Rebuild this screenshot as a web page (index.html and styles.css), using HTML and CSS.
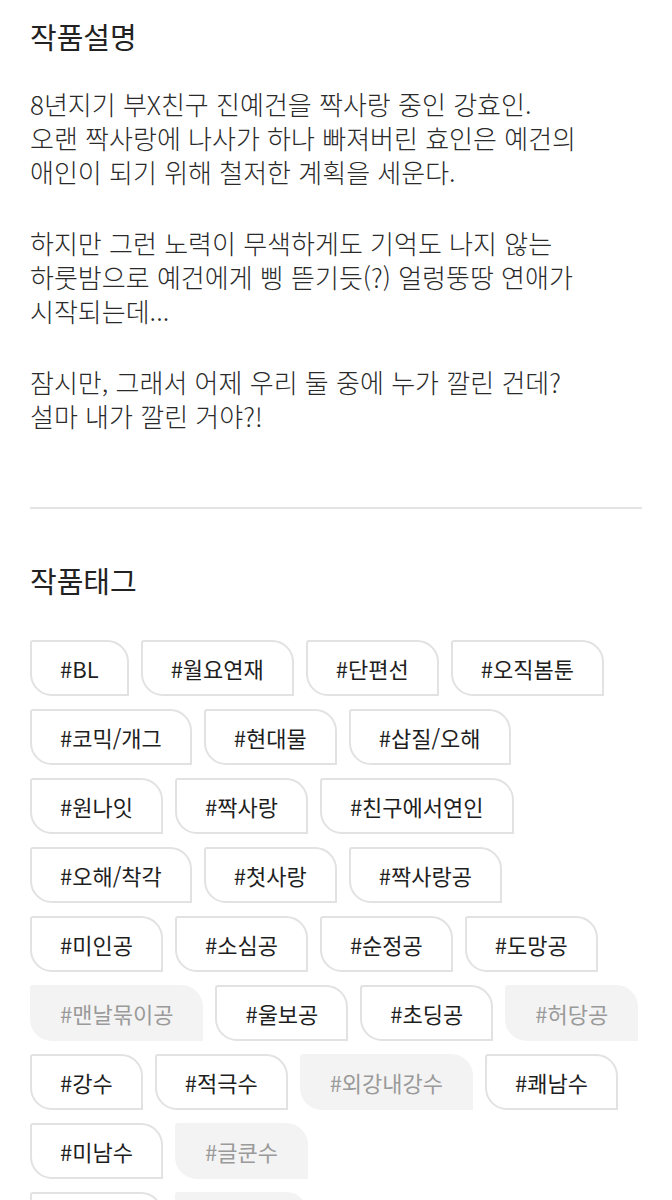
FILE: index.html
```html
<!DOCTYPE html>
<html lang="ko">
<head>
	<meta charset="UTF-8">
	<meta name="viewport" content="width=device-width">
	<title>작품정보</title>
	<link rel="stylesheet" href="styles.css">
</head>
<body>
<div class="section">
	<h2 class="title">작품설명</h2>
	<div class="synopsis">
		<p>8년지기 부X친구 진예건을 짝사랑 중인 강효인.<br>오랜 짝사랑에 나사가 하나 빠져버린 효인은 예건의<br>애인이 되기 위해 철저한 계획을 세운다.</p>
		<p>하지만 그런 노력이 무색하게도 기억도 나지 않는<br>하룻밤으로 예건에게 삥 뜯기듯(?) 얼렁뚱땅 연애가<br>시작되는데...</p>
		<p>잠시만, 그래서 어제 우리 둘 중에 누가 깔린 건데?<br>설마 내가 깔린 거야?!</p>
	</div>
</div>

<hr class="divider">

<div class="section">
	<h2 class="title tags-title">작품태그</h2>
	<ul class="tags">
		<li class="tag">#BL</li>
		<li class="tag">#월요연재</li>
		<li class="tag">#단편선</li>
		<li class="tag">#오직봄툰</li>
		<li class="tag">#코믹/개그</li>
		<li class="tag">#현대물</li>
		<li class="tag">#삽질/오해</li>
		<li class="tag">#원나잇</li>
		<li class="tag">#짝사랑</li>
		<li class="tag">#친구에서연인</li>
		<li class="tag">#오해/착각</li>
		<li class="tag">#첫사랑</li>
		<li class="tag">#짝사랑공</li>
		<li class="tag">#미인공</li>
		<li class="tag">#소심공</li>
		<li class="tag">#순정공</li>
		<li class="tag">#도망공</li>
		<li class="tag off">#맨날묶이공</li>
		<li class="tag">#울보공</li>
		<li class="tag">#초딩공</li>
		<li class="tag off">#허당공</li>
		<li class="tag">#강수</li>
		<li class="tag">#적극수</li>
		<li class="tag off">#외강내강수</li>
		<li class="tag">#쾌남수</li>
		<li class="tag">#미남수</li>
		<li class="tag off">#글쿤수</li>
	</ul>
	<ul class="tags">
		<li class="tag">#다정수</li>
		<li class="tag off">#순진수</li>
	</ul>
</div>
</body>
</html>
```

FILE: styles.css
```css
html { overflow: hidden; }

body {
	margin: 0;
	background: #fff;
	color: #222;
	font-family: "Noto Sans CJK KR", "Noto Sans", sans-serif;
}

.section { padding: 0 30px; }

.title {
	margin: 0;
	padding-top: 15px;
	font-size: 29px;
	font-weight: 400;
	line-height: 42px;
	color: #222;
}

.synopsis {
	margin-top: 30px;
	font-size: 26px;
	font-weight: 300;
	line-height: 34px;
	color: #2a2a2a;
}

.synopsis p { margin: 0 0 37px 0; }
.synopsis p:last-child { margin-bottom: 0; }

.divider {
	margin: 74px 30px 0 30px;
	border: 0;
	height: 2px;
	background: #e4e4e4;
}

.tags-title { padding-top: 50px; }

.tags {
	list-style: none;
	margin: 39px 0 0 0;
	padding: 0;
	display: flex;
	flex-wrap: wrap;
	gap: 13px 12px;
}

.tags + .tags { margin-top: 13px; }

.tag {
	height: 56px;
	box-sizing: border-box;
	padding: 0 28px;
	display: flex;
	align-items: center;
	font-size: 22px;
	color: #1e1e1e;
	border: 2px solid #e2e2e2;
	border-radius: 3px 22px 0 22px;
	background: #fff;
}

.tag.off {
	color: #9a9a9a;
	background: #f3f3f3;
	border-color: #f3f3f3;
}
```
